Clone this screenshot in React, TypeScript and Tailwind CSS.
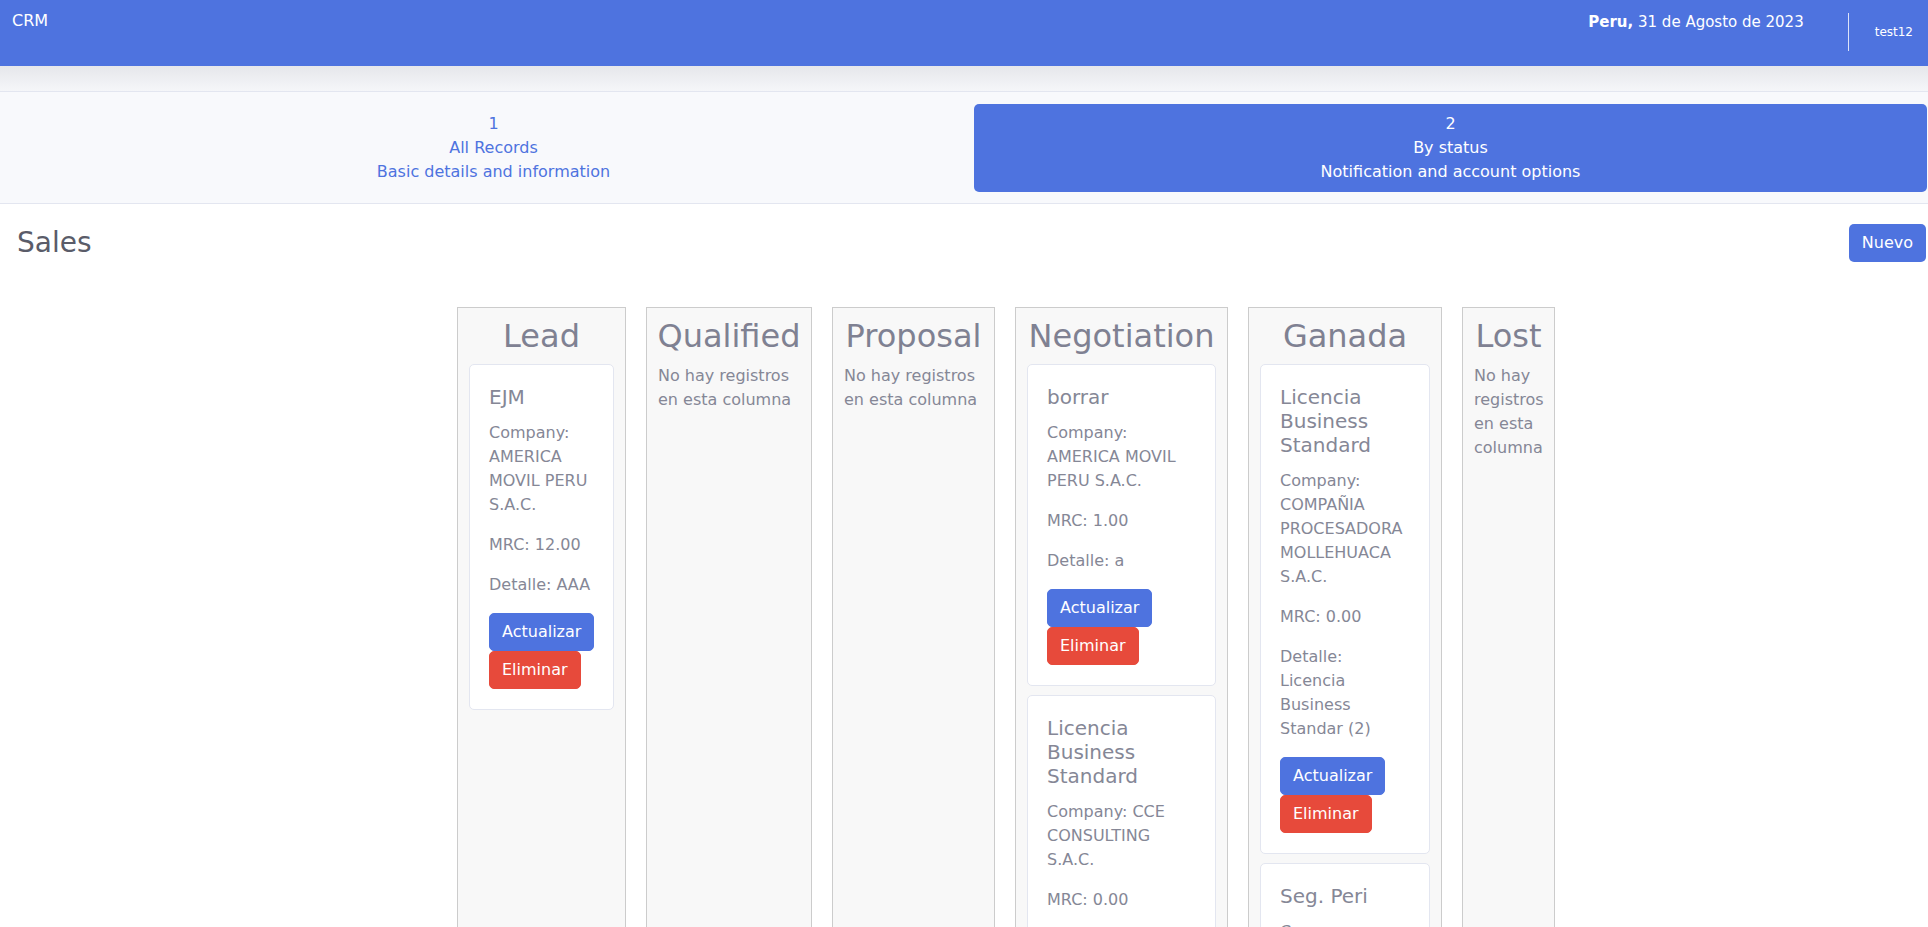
import React from 'react'

type Card = {
  title: string[]
  company: string[]
  mrc?: string
  detalle?: string[]
}

type Column = {
  title: string
  width: string
  cards?: Card[]
  empty?: string[]
}

const columns: Column[] = [
  {
    title: 'Lead',
    width: 'w-[169px]',
    cards: [
      {
        title: ['EJM'],
        company: ['Company:', 'AMERICA', 'MOVIL PERU', 'S.A.C.'],
        mrc: 'MRC: 12.00',
        detalle: ['Detalle: AAA'],
      },
    ],
  },
  { title: 'Qualified', width: 'w-[166px]', empty: ['No hay registros', 'en esta columna'] },
  { title: 'Proposal', width: 'w-[163px]', empty: ['No hay registros', 'en esta columna'] },
  {
    title: 'Negotiation',
    width: 'w-[213px]',
    cards: [
      {
        title: ['borrar'],
        company: ['Company:', 'AMERICA MOVIL', 'PERU S.A.C.'],
        mrc: 'MRC: 1.00',
        detalle: ['Detalle: a'],
      },
      {
        title: ['Licencia', 'Business', 'Standard'],
        company: ['Company: CCE', 'CONSULTING', 'S.A.C.'],
        mrc: 'MRC: 0.00',
        detalle: ['Detalle:', 'Licencia', 'Business', 'Standard'],
      },
    ],
  },
  {
    title: 'Ganada',
    width: 'w-[194px]',
    cards: [
      {
        title: ['Licencia', 'Business', 'Standard'],
        company: ['Company:', 'COMPAÑIA', 'PROCESADORA', 'MOLLEHUACA', 'S.A.C.'],
        mrc: 'MRC: 0.00',
        detalle: ['Detalle:', 'Licencia', 'Business', 'Standar (2)'],
      },
      {
        title: ['Seg. Peri'],
        company: ['Company:', 'PERU S.A.C.'],
        mrc: 'MRC: 0.00',
        detalle: ['Detalle:'],
      },
    ],
  },
  { title: 'Lost', width: 'w-[93px]', empty: ['No hay', 'registros', 'en esta', 'columna'] },
]

const Lines = ({ lines }: { lines: string[] }) => (
  <>
    {lines.map((l, i) => (
      <span key={i} className="block whitespace-nowrap">
        {l}
      </span>
    ))}
  </>
)

const SaleCard = ({ card }: { card: Card }) => (
  <div className="bg-white border border-[#e3e6f0] rounded-[5px] px-[19px] py-[20px] mb-[9px]">
    <h5 className="text-[20px] leading-6 mb-3 text-[#858796]">
      <Lines lines={card.title} />
    </h5>
    <p className="text-[16px] leading-6 mb-4">
      <Lines lines={card.company} />
    </p>
    {card.mrc && <p className="text-[16px] leading-6 mb-4">{card.mrc}</p>}
    {card.detalle && (
      <p className="text-[16px] leading-6 mb-4">
        <Lines lines={card.detalle} />
      </p>
    )}
    <div className="flex flex-col items-start">
      <button
        type="button"
        className="bg-[#4e73df] border border-[#4e73df] text-white text-[16px] leading-6 px-3 py-[6px] rounded-[5px] whitespace-nowrap"
      >
        Actualizar
      </button>
      <button
        type="button"
        className="bg-[#e74a3b] border border-[#e74a3b] text-white text-[16px] leading-6 px-3 py-[6px] rounded-[5px] whitespace-nowrap"
      >
        Eliminar
      </button>
    </div>
  </div>
)

export default function App() {
  return (
    <div className="h-screen overflow-hidden bg-white text-[#858796] font-['DejaVu_Sans',sans-serif]">
      <header className="h-[66px] bg-[#4e73df] text-white flex justify-between items-start">
        <div className="pl-[12px] pt-[11px] text-[16px] leading-[20px]">CRM</div>
        <div className="flex items-start">
          <div className="pt-[12px] text-[15px] leading-[20px] mr-[44px]">
            <span className="font-bold">Peru,</span> 31 de Agosto de 2023
          </div>
          <div className="w-px h-[38px] mt-[13px] bg-white/80" />
          <div className="pl-[26px] pr-[15px] pt-[24px] text-[12px] leading-[16px]">test12</div>
        </div>
      </header>
      <div className="h-[25px] bg-linear-to-b from-[#e6e7eb] to-[#f5f6f9]" />

      <nav className="border-y border-[#e3e6f0] bg-[#f8f9fc] pt-[12px] pb-[11px]">
        <div className="grid grid-cols-2 gap-[4px] pl-[17px] pr-[1px] text-[16px] leading-6 text-center">
          <div className="py-2 text-[#4e73df] rounded-[5px]">
            <div>1</div>
            <div>All Records</div>
            <div>Basic details and information</div>
          </div>
          <div className="py-2 bg-[#4e73df] text-white rounded-[5px]">
            <div>2</div>
            <div>By status</div>
            <div>Notification and account options</div>
          </div>
        </div>
      </nav>

      <div className="flex justify-between items-center pl-[17px] pr-[2px] pt-[20px]">
        <h1 className="text-[28px] leading-[36px] text-[#5a5c69]">Sales</h1>
        <button
          type="button"
          className="bg-[#4e73df] text-white text-[16px] leading-6 px-[13px] py-[7px] rounded-[5px]"
        >
          Nuevo
        </button>
      </div>

      <div className="flex justify-center items-stretch gap-[20px] pl-[84px] mt-[45px]">
        {columns.map((col) => (
          <div
            key={col.title}
            className={`${col.width} shrink-0 border border-[#cccccc] bg-[#f8f8f8] px-[11px] pt-[9px] pb-[200px]`}
          >
            <h2 className="flex justify-center whitespace-nowrap text-[32px] leading-[38px] mb-[9px] text-[#7f8192]">
              {col.title}
            </h2>
            {col.empty && (
              <p className="text-[16px] leading-6">
                <Lines lines={col.empty} />
              </p>
            )}
            {col.cards?.map((c, i) => <SaleCard key={i} card={c} />)}
          </div>
        ))}
      </div>
    </div>
  )
}
